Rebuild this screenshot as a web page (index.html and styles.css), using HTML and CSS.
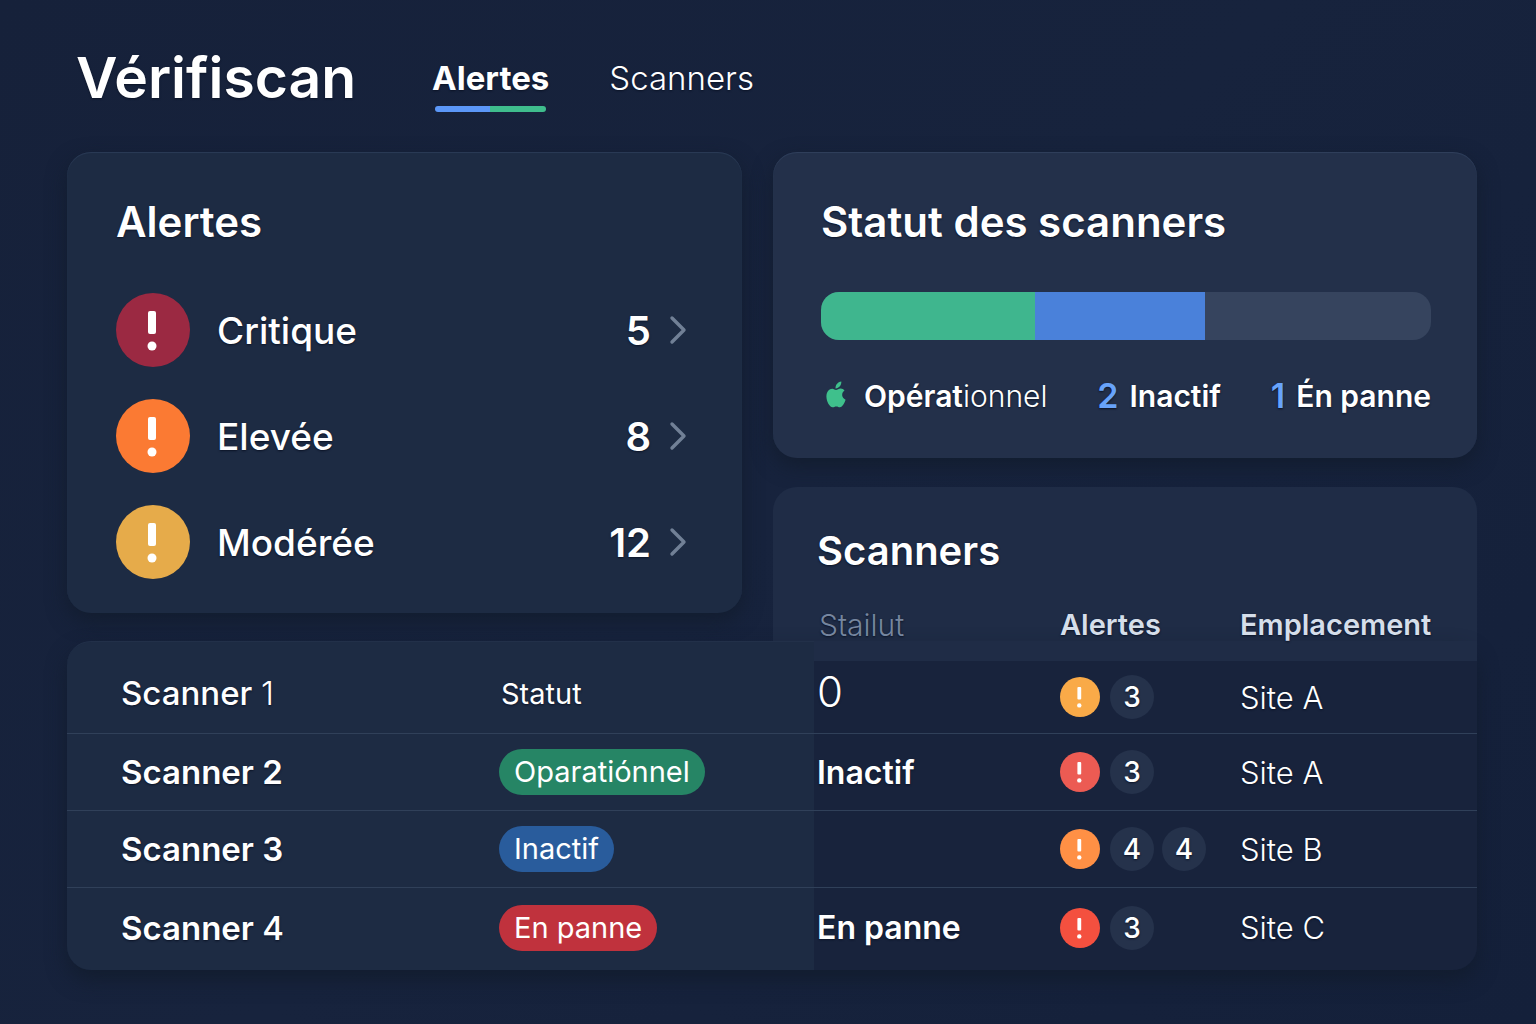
FILE: index.html
```html
<!DOCTYPE html>
<html lang="fr">

<head>
    <meta charset="UTF-8">
    <meta name="viewport" content="width=device-width, initial-scale=1">
    <title>Vérifiscan</title>
    <link rel="stylesheet" href="styles.css">
</head>

<body>
    <!-- Shared icons -->
    <svg class="sprite" aria-hidden="true">
        <symbol id="alert" viewBox="0 0 74 74">
            <circle cx="37" cy="37" r="37" fill="currentColor" />
            <rect x="32" y="18" width="8" height="23" rx="2" fill="#fff" />
            <circle cx="36" cy="53" r="4.5" fill="#fff" />
        </symbol>
        <symbol id="alert-small" viewBox="0 0 40 40">
            <circle cx="20" cy="20" r="20" fill="currentColor" />
            <rect x="17.4" y="10" width="3.8" height="12.4" rx="1" fill="#fff" />
            <circle cx="19.3" cy="28.4" r="2.2" fill="#fff" />
        </symbol>
        <symbol id="chevron" viewBox="0 0 18 30">
            <path d="M3 3 L15 15 L3 27" fill="none" stroke="currentColor" stroke-width="3.4" stroke-linecap="round" stroke-linejoin="round" />
        </symbol>
    </svg>

    <header class="topbar">
        <h1 class="logo">Vérifiscan</h1>
        <nav class="tabs">
            <a class="tab active" href="#alertes">Alertes</a>
            <a class="tab" href="#scanners">Scanners</a>
        </nav>
    </header>

    <main>
        <div class="top">
            <section class="card alerts" id="alertes">
                <h2>Alertes</h2>
                <a class="alert-row" href="#scanners">
                    <svg class="alert-icon critical"><use href="#alert" /></svg>
                    <span class="alert-name">Critique</span>
                    <span class="count">5</span>
                    <svg class="chevron"><use href="#chevron" /></svg>
                </a>
                <a class="alert-row" href="#scanners">
                    <svg class="alert-icon high"><use href="#alert" /></svg>
                    <span class="alert-name">Elevée</span>
                    <span class="count">8</span>
                    <svg class="chevron"><use href="#chevron" /></svg>
                </a>
                <a class="alert-row" href="#scanners">
                    <svg class="alert-icon moderate"><use href="#alert" /></svg>
                    <span class="alert-name">Modérée</span>
                    <span class="count">12</span>
                    <svg class="chevron"><use href="#chevron" /></svg>
                </a>
            </section>

            <div class="side">
                <section class="card status">
                    <h2>Statut des scanners</h2>
                    <div class="bar">
                        <div class="bar-ok"></div>
                        <div class="bar-idle"></div>
                    </div>
                    <ul class="legend">
                        <li>
                            <svg class="apple" viewBox="0 0 20 27" aria-hidden="true">
                                <path d="M9.5 7.4 C9.3 3.8 11.6 1 15.3 .4 C15.6 4 13.1 7 9.5 7.4 Z" />
                                <path d="M10 9 C11.3 9 12.7 7.6 14.7 7.6 C16.3 7.6 17.7 8.3 18.5 9.6 C15.2 11.6 15.3 17 19.6 18.8 C18.8 21.5 16.5 26.3 13.9 26.3 C12.5 26.3 12 25.5 10.3 25.5 C8.6 25.5 8 26.3 6.6 26.3 C3.6 26.3 .4 20.5 .4 15.6 C.4 10.6 3.2 7.7 6.2 7.7 C7.9 7.7 9 9 10 9 Z" />
                            </svg>
                            <span>Opérat<span class="light">ionnel</span></span>
                        </li>
                        <li><span class="num">2</span> Inactif</li>
                        <li><span class="num">1</span> Én panne</li>
                    </ul>
                </section>
                <section class="scanners-head" id="scanners">
                    <h2>Scanners</h2>
                </section>
            </div>
        </div>

        <!-- The header row is pulled up over the Scanners panel -->
        <table class="scanners">
            <colgroup>
                <col class="col-name">
                <col class="col-state">
                <col class="col-status">
                <col class="col-alerts">
                <col class="col-site">
            </colgroup>
            <thead>
                <tr>
                    <td></td>
                    <td></td>
                    <th scope="col" class="muted">Stailut</th>
                    <th scope="col">Alertes</th>
                    <th scope="col">Emplacement</th>
                </tr>
            </thead>
            <tbody>
                <tr>
                    <th scope="row" class="medium">Scanner <span class="light">1</span></th>
                    <td><span class="state-text">Statut</span></td>
                    <td class="zero">0</td>
                    <td>
                        <div class="badges">
                            <svg class="badge-icon amber"><use href="#alert-small" /></svg>
                            <span class="badge">3</span>
                        </div>
                    </td>
                    <td class="site">Site A</td>
                </tr>
                <tr>
                    <th scope="row">Scanner 2</th>
                    <td><span class="pill green">Oparatiónnel</span></td>
                    <td class="strong">Inactif</td>
                    <td>
                        <div class="badges">
                            <svg class="badge-icon coral"><use href="#alert-small" /></svg>
                            <span class="badge">3</span>
                        </div>
                    </td>
                    <td class="site">Site A</td>
                </tr>
                <tr>
                    <th scope="row">Scanner 3</th>
                    <td><span class="pill blue">Inactif</span></td>
                    <td></td>
                    <td>
                        <div class="badges">
                            <svg class="badge-icon orange"><use href="#alert-small" /></svg>
                            <span class="badge">4</span>
                            <span class="badge">4</span>
                        </div>
                    </td>
                    <td class="site">Site B</td>
                </tr>
                <tr>
                    <th scope="row">Scanner <span class="medium">4</span></th>
                    <td><span class="pill red">En panne</span></td>
                    <td class="strong">En panne</td>
                    <td>
                        <div class="badges">
                            <svg class="badge-icon scarlet"><use href="#alert-small" /></svg>
                            <span class="badge">3</span>
                        </div>
                    </td>
                    <td class="site">Site C</td>
                </tr>
            </tbody>
        </table>
    </main>
</body>

</html>
```
FILE: styles.css
```css
* {
    box-sizing: border-box;
}

body {
    margin: 0;
    min-height: 100vh;
    padding: 40px 59px 50px 67px;
    background: linear-gradient(135deg, #16213a 0%, #17233d 50%, #14203a 100%);
    color: #fff;
    font-family: Inter, "Liberation Sans", sans-serif;
    text-shadow: 0 1px 2px #0b1326;
}

h1,
h2 {
    margin: 0;
    font-weight: 600;
}

h2 {
    font-size: 42px;
    line-height: 52px;
}

a {
    color: inherit;
    text-decoration: none;
}

.sprite {
    display: none;
}

.medium {
    font-weight: 500;
}

.light {
    font-weight: 300;
}

/* Header */
.topbar {
    display: flex;
    align-items: center;
    gap: 76px;
    height: 76px;
    padding-left: 9px;
}

.logo {
    font-size: 57px;
    line-height: 76px;
}

.tabs {
    display: flex;
    gap: 60px;
    font-size: 33px;
    line-height: 44px;
    font-weight: 300;
}

.tab.active {
    font-weight: 700;
}

.tab::after {
    content: "";
    display: block;
    height: 6px;
    margin: 6px 3px -12px;
    border-radius: 3px;
}

.tab.active::after {
    background: linear-gradient(90deg, #5b97f8 50%, #3fbd8d 50%);
}

/* Cards */
main {
    margin-top: 36px;
}

.top {
    display: grid;
    grid-template-columns: 675fr 704fr;
    column-gap: 31px;
}

.card {
    border-radius: 24px;
    box-shadow: 0 8px 20px rgba(18, 28, 44, 0.8), inset 0 1px 1px rgba(120, 150, 190, 0.16);
}

.alerts {
    margin-bottom: 28px;
    padding: 44px 55px 34px 49px;
    background: #1d2b43;
}

.alerts h2 {
    margin-bottom: 45px;
}

.alert-row {
    display: flex;
    align-items: center;
    margin-bottom: 32px;
}

.alert-row:last-child {
    margin-bottom: 0;
}

.alert-icon {
    width: 74px;
    height: 74px;
    margin-right: 27px;
}

.alert-name {
    flex: 1;
    font-size: 37px;
    font-weight: 500;
}

.count {
    font-size: 40px;
    font-weight: 600;
}

.chevron {
    width: 18px;
    height: 30px;
    margin-left: 18px;
    color: #718096;
}

.critical {
    color: #9b2942;
}

.high {
    color: #fb7a33;
}

.moderate {
    color: #e6ab4a;
}

/* Right column */
.side {
    display: flex;
    flex-direction: column;
    gap: 29px;
}

.status {
    padding: 44px 46px 38px 48px;
    background: #23304a;
}

.bar {
    display: flex;
    height: 48px;
    margin: 44px 0 32px;
    overflow: hidden;
    border-radius: 18px;
    background: #36445e;
}

.bar-ok {
    width: 35%;
    background: #3fb68e;
}

.bar-idle {
    width: 28%;
    background: #4a81da;
}

.legend {
    display: flex;
    align-items: center;
    justify-content: space-between;
    margin: 0;
    padding: 0;
    list-style: none;
    font-size: 30px;
    line-height: 48px;
    font-weight: 600;
}

.legend li {
    display: flex;
    align-items: center;
    gap: 11px;
}

.apple {
    width: 20px;
    height: 27px;
    margin: 0 7px 4px 5px;
    fill: #3fc08c;
}

.num {
    color: #68a3fa;
    font-size: 34px;
}

.scanners-head {
    flex: 1;
    padding: 38px 44px 0;
    border-radius: 24px 24px 0 0;
    background: #1f2c46;
}

.scanners-head h2 {
    font-size: 40px;
}

/* Scanner table */
.scanners {
    position: relative;
    width: 100%;
    margin-top: -48px;
    border-spacing: 0;
    table-layout: fixed;
    text-align: left;
}

.col-name {
    width: 432px;
}

.col-state {
    width: 315px;
}

.col-status {
    width: 246px;
}

.col-alerts {
    width: 180px;
}

.scanners td,
.scanners th {
    padding: 0;
}

.scanners thead tr {
    height: 48px;
}

.scanners thead th {
    padding-top: 16px;
    color: #d5deea;
    font-size: 29px;
    line-height: 32px;
    font-weight: 600;
    vertical-align: bottom;
}

.scanners thead .muted {
    padding-left: 5px;
    color: #76869f;
    font-size: 30px;
    font-weight: 300;
}

tbody {
    border-radius: 24px;
    box-shadow: 0 10px 20px rgba(18, 28, 44, 0.8);
}

tbody tr {
    height: 77px;
}

tbody tr:first-child {
    height: 93px;
}

tbody tr:last-child {
    height: 82px;
}

tbody th,
tbody td {
    border-bottom: 1px solid #304059;
    background: #1d2b43;
}

.scanners tbody tr:last-child > * {
    padding-bottom: 3px;
    border-bottom: none;
}

tbody th {
    font-size: 33px;
    font-weight: 600;
}

.scanners tbody th {
    padding-left: 54px;
}

tbody th.medium {
    font-weight: 500;
}

tbody td:nth-child(n+3) {
    background: #18233c;
}

.scanners tbody tr:first-child > * {
    padding-top: 11px;
}

/* The panel above runs down into the first row */
.scanners tbody tr:first-child td:nth-child(n+3) {
    padding-top: 20px;
    background: linear-gradient(#1f2c46 20px, #18233c 20px);
}

.scanners tbody td:nth-child(3) {
    padding-left: 3px;
}

tbody tr:first-child th {
    border-top-left-radius: 24px;
}

tbody tr:first-child th,
tbody tr:first-child td:nth-child(2) {
    border-top: 1px solid #223049;
}

tbody tr:last-child th {
    border-bottom-left-radius: 24px;
}

tbody tr:last-child td:last-child {
    border-bottom-right-radius: 24px;
}

.state-text {
    padding-left: 2px;
    font-size: 29px;
}

.scanners .zero {
    padding-bottom: 10px;
    font-size: 42px;
    font-weight: 300;
    line-height: 48px;
}

.strong {
    font-size: 32px;
    font-weight: 600;
}

.site {
    font-size: 31px;
    font-weight: 300;
}

.pill {
    display: inline-block;
    padding: 0 15px;
    border-radius: 23px;
    font-size: 29px;
    line-height: 46px;
    text-shadow: none;
}

.green {
    background: #268565;
}

.blue {
    background: #295c9c;
}

.red {
    background: #c0323d;
}

.badges {
    display: flex;
    align-items: center;
    gap: 8px;
}

.badge-icon {
    width: 40px;
    height: 40px;
    margin-right: 2px;
}

.badge {
    width: 44px;
    height: 44px;
    border-radius: 50%;
    background: #25324b;
    font-size: 28px;
    line-height: 44px;
    font-weight: 500;
    text-align: center;
}

.amber {
    color: #f9aa48;
}

.coral {
    color: #ec5b53;
}

.orange {
    color: #ff9045;
}

.scarlet {
    color: #f4503f;
}
```
